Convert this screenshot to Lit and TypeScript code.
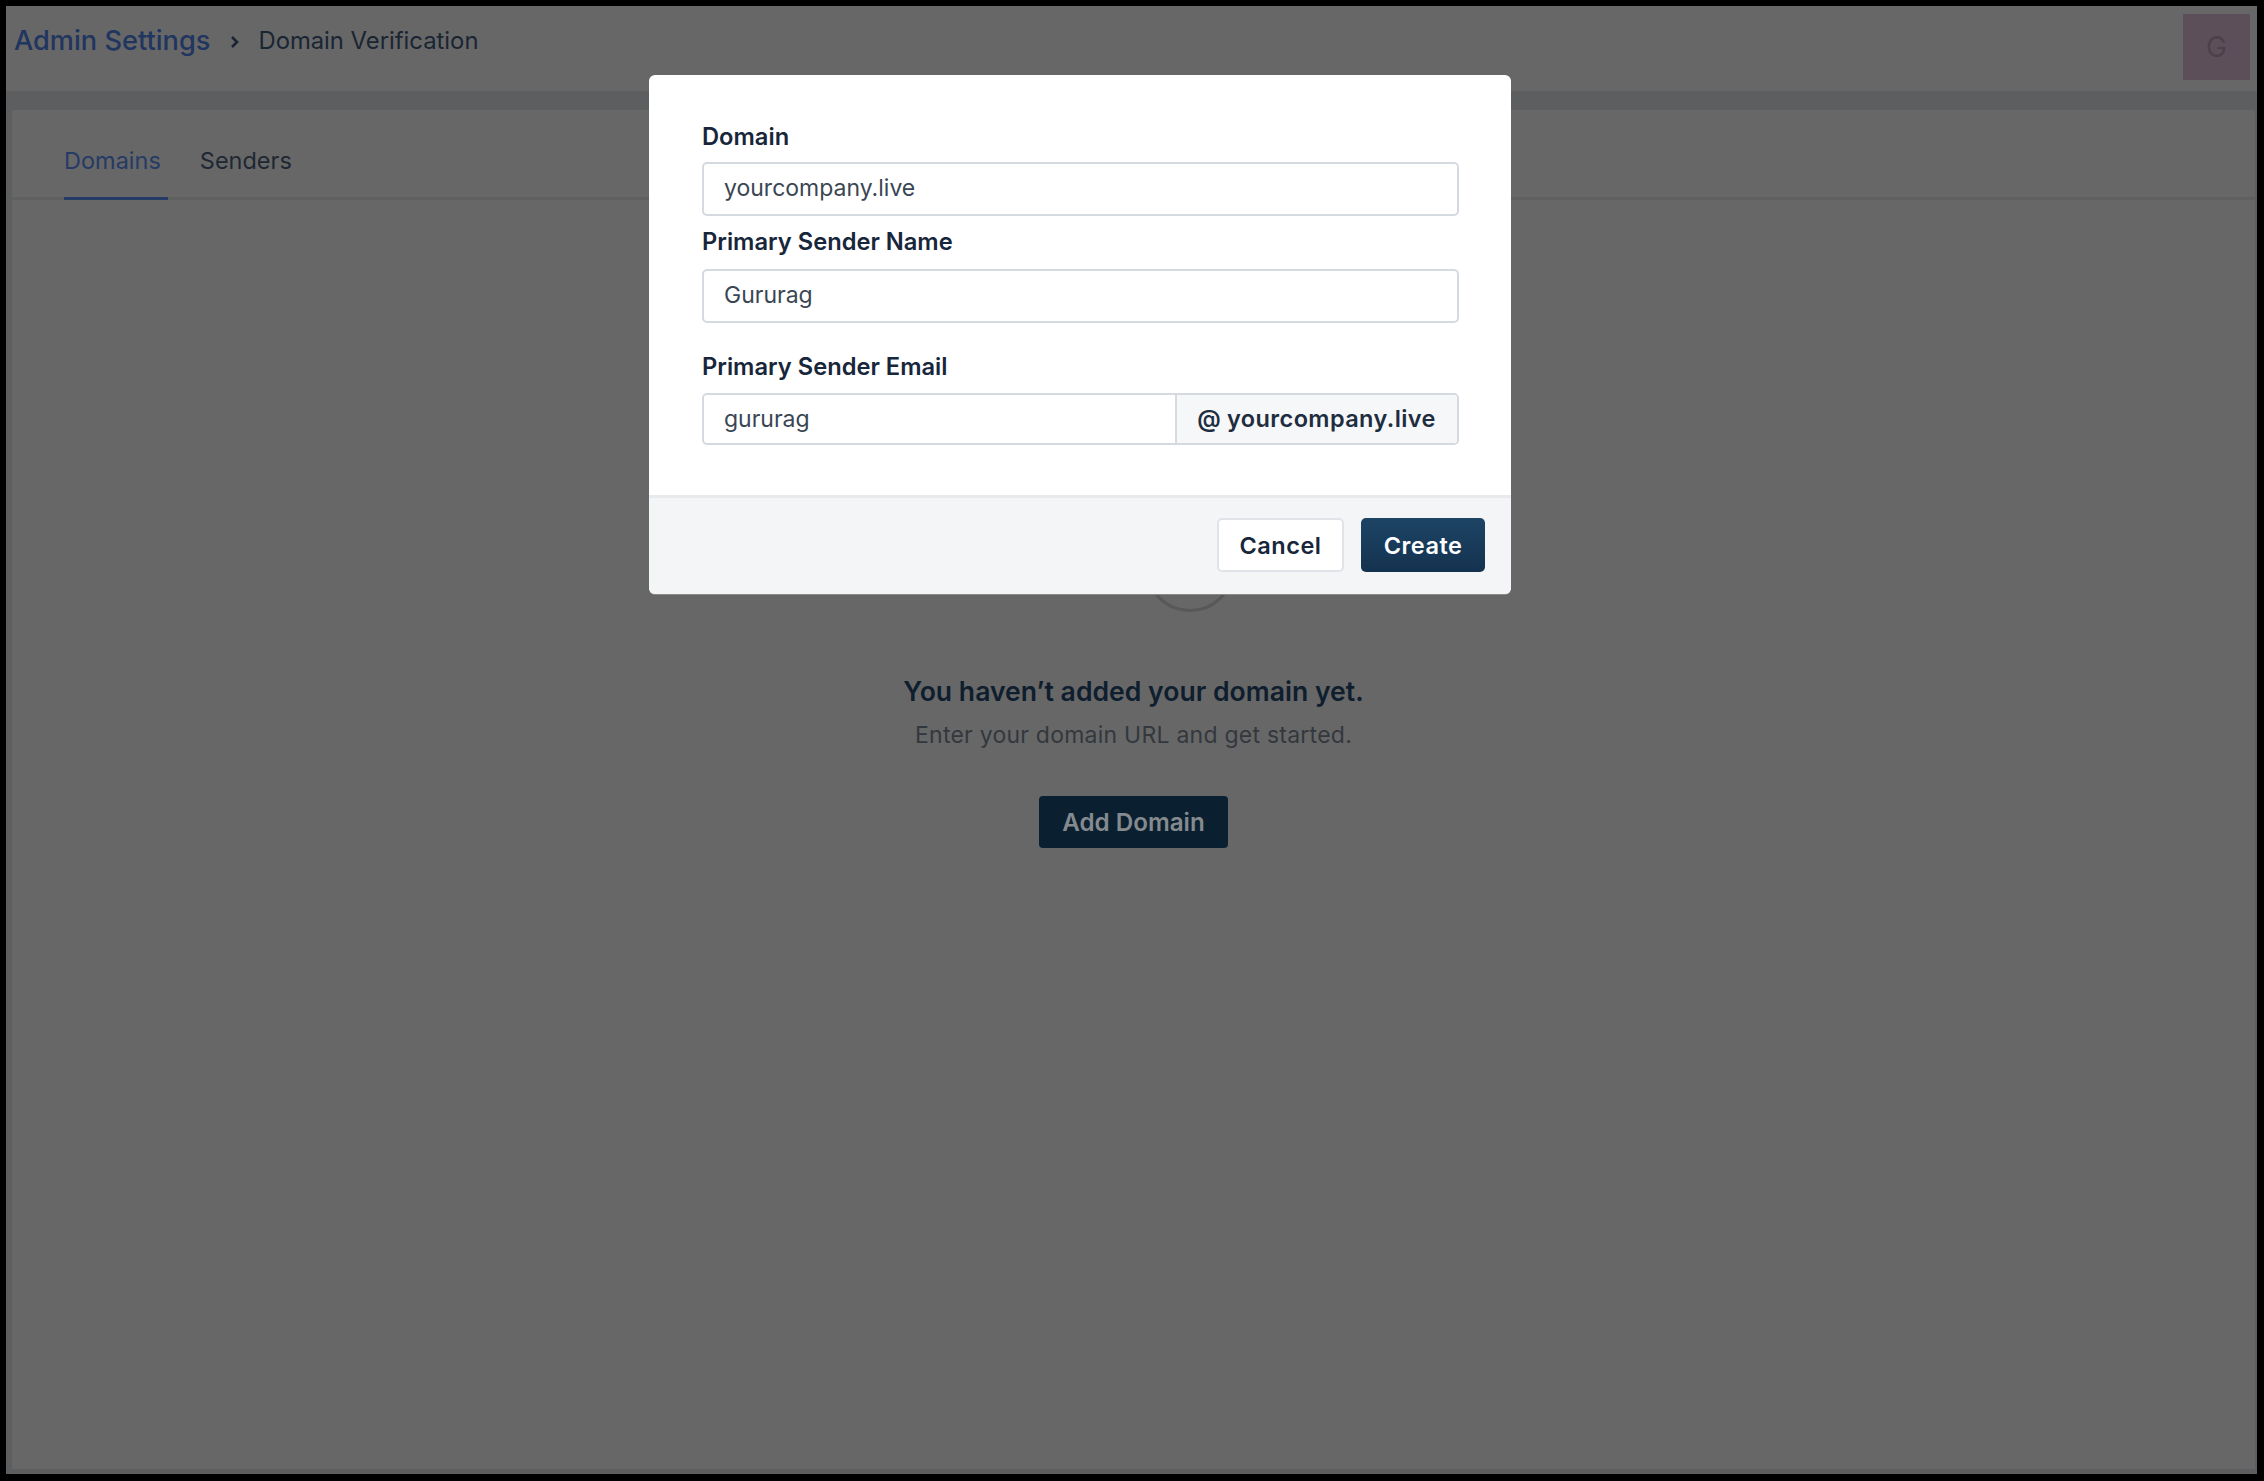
import { LitElement, html, css } from "lit";
import { customElement } from "lit/decorators.js";

@customElement("app-root")
export class AppRoot extends LitElement {
  static styles = css`
    :host { display: block; height: 1481px; box-sizing: border-box; background: #000; padding: 6px 7px 7px 6px; position: relative; font-family: Inter, "Liberation Sans", sans-serif; }
    * { box-sizing: border-box; }
    .page { height: 100%; background: #5d5e60; display: flex; flex-direction: column; }
    .top { height: 85px; background: #676767; display: flex; justify-content: space-between; padding: 10px 7px 0 8px; flex: none; }
    .crumbs { display: flex; align-items: center; height: 49px; font-size: 23.8px; color: #1a2533; }
    .crumbs .root { font-size: 27.2px; font-weight: 500; color: #20355f; }
    .crumbs svg { margin: 3px 18px 0 20px; }
    .avatar { width: 67px; height: 66px; background: #5d4f59; color: #4f3f4b; font-size: 28px; display: flex; align-items: center; justify-content: center; margin-top: -2px; }
    .card { flex: 1; margin: 19px 2px 5px 6px; background: #676767; display: flex; flex-direction: column; align-items: center; }
    .tabs { align-self: stretch; height: 90px; border-bottom: 3px solid #5f6160; display: flex; padding-left: 52px; gap: 32px; flex: none; }
    .tab { height: 90px; padding: 36px 7px 0 0; font-size: 23.5px; color: #1e2733; }
    .tab.active { color: #263a66; border-bottom: 3px solid #263a66; }
    .circle { width: 90px; height: 90px; border: 3px solid #585858; border-radius: 50%; margin: 322px 0 0 113px; flex: none; }
    h2 { margin: 62px 0 0; font-size: 26.6px; line-height: 34px; font-weight: 600; color: #0f1e2e; }
    p { margin: 11px 0 0; font-size: 23px; line-height: 32px; color: #33383e; letter-spacing: 0.24px; }
    .add { margin-top: 45px; width: 189px; height: 52px; border-radius: 4px; background: #0a2030; color: #858a8f; font-size: 24.2px; font-weight: 600; display: flex; align-items: center; justify-content: center; }
    .modal { position: absolute; left: 649px; top: 75px; width: 862px; height: 519px; background: #fff; border-radius: 6px; display: flex; flex-direction: column; color: #17263a; overflow: hidden; box-shadow: 0 1px 0 #8a8a8a; }
    .body { flex: 1; padding: 46px 52px 0 53px; display: flex; flex-direction: column; }
    label { font-size: 23.7px; font-weight: 600; line-height: 32px; color: #17263a; display: block; }
    .input { height: 54px; border: 2px solid #d5d9e0; border-radius: 5px; display: flex; align-items: center; padding: 0 0 2px 20px; font-size: 23px; color: #3a4654; margin-top: 9px; flex: none; }
    .l2 { margin-top: 10px; }
    .l2 + .input { margin-top: 11px; }
    .l3 { margin-top: 28px; }
    .email { height: 52px; padding: 0; margin-top: 10px; }
    .email .val { flex: 1; padding: 0 0 1px 20px; }
    .email .suffix { width: 282px; height: 100%; background: #f6f7f9; border-left: 2px solid #d5d9e0; display: flex; align-items: center; justify-content: center; font-weight: 600; font-size: 23.5px; color: #1e2d40; gap: 6px; letter-spacing: 0.4px; border-radius: 0 3px 3px 0; padding: 0 1px 2px 0; }
    .foot { height: 99px; background: #f4f5f7; border-top: 3px solid #e8eaed; display: flex; justify-content: flex-end; align-items: center; padding: 0 26px 2px 0; gap: 17px; flex: none; }
    .btn { height: 54px; border-radius: 5px; display: flex; align-items: center; justify-content: center; font-size: 23.5px; font-weight: 600; letter-spacing: 0.5px; }
    .cancel { width: 127px; background: #fff; border: 2px solid #e0e3e8; color: #17263a; }
    .create { width: 124px; background: linear-gradient(#1d4465, #14324f); color: #fff; }
  `;
  render() {
    return html`
      <div class="page">
        <div class="top">
          <div class="crumbs">
            <span class="root">Admin Settings</span>
            <svg width="10" height="14" viewBox="0 0 10 14" fill="none" stroke="#1a2533" stroke-width="2.6"><path d="M2 2l5 5-5 5"/></svg>
            <span>Domain Verification</span>
          </div>
          <div class="avatar">G</div>
        </div>
        <div class="card">
          <div class="tabs">
            <div class="tab active">Domains</div>
            <div class="tab">Senders</div>
          </div>
          <div class="circle"></div>
          <h2>You haven’t added your domain yet.</h2>
          <p>Enter your domain URL and get started.</p>
          <div class="add">Add Domain</div>
        </div>
      </div>
      <div class="modal">
        <div class="body">
          <label>Domain</label>
          <div class="input">yourcompany.live</div>
          <label class="l2">Primary Sender Name</label>
          <div class="input">Gururag</div>
          <label class="l3">Primary Sender Email</label>
          <div class="input email">
            <span class="val">gururag</span>
            <span class="suffix"><span>@</span><span>yourcompany.live</span></span>
          </div>
        </div>
        <div class="foot">
          <div class="btn cancel">Cancel</div>
          <div class="btn create">Create</div>
        </div>
      </div>
    `;
  }
}
